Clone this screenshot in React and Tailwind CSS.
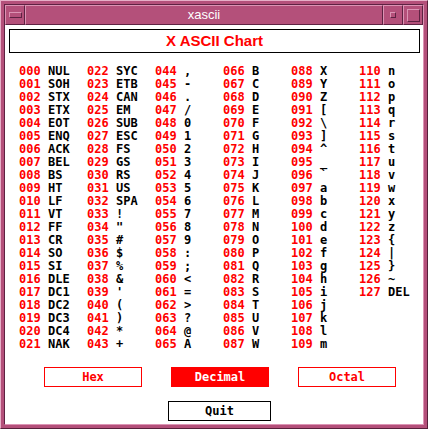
import React from 'react';

const CTRL = [
  'NUL', 'SOH', 'STX', 'ETX', 'EOT', 'ENQ', 'ACK', 'BEL', 'BS', 'HT', 'LF',
  'VT', 'FF', 'CR', 'SO', 'SI', 'DLE', 'DC1', 'DC2', 'DC3', 'DC4', 'NAK',
  'SYC', 'ETB', 'CAN', 'EM', 'SUB', 'ESC', 'FS', 'GS', 'RS', 'US', 'SPA',
];

// build the 128 entries, then cut them in columns of 22
const entries = Array.from({ length: 128 }, (_, i) => ({
  code: String(i).padStart(3, '0'),
  name: i < CTRL.length ? CTRL[i] : i === 127 ? 'DEL' : String.fromCharCode(i),
}));
const columns = [0, 1, 2, 3, 4, 5].map((c) => entries.slice(c * 22, c * 22 + 22));

const raised = 'border border-t-[#dc94b4] border-l-[#dc94b4] border-r-[#5e2242] border-b-[#5e2242]';

const TitleBar = () => (
  <div className="flex h-[20px] shrink-0">
    <div className={`${raised} w-[20px] flex items-center justify-center`}>
      <span className={`${raised} w-[13px] h-[6px]`} />
    </div>
    <div className={`${raised} flex-1 flex items-center justify-center text-white text-[13px] font-['Liberation_Sans',sans-serif]`}>
      xascii
    </div>
    <div className={`${raised} w-[20px] flex items-center justify-center`}>
      <span className={`${raised} w-[6px] h-[6px]`} />
    </div>
    <div className={`${raised} w-[20px] flex items-center justify-center`}>
      <span className={`${raised} w-[13px] h-[13px]`} />
    </div>
  </div>
);

const ModeButton = ({ label, active }) => (
  <div
    className={`w-[98px] h-[20px] flex items-center justify-center border border-[#ff0000] text-[12px] font-bold ${
      active ? 'bg-[#ff0000] text-white' : 'bg-white text-[#ff0000]'
    }`}
  >
    {label}
  </div>
);

export default function App() {
  return (
    <div className="w-[428px] h-[429px] bg-[#b4507a] p-[3px] border border-t-[#e6b0c8] border-l-[#e6b0c8] border-r-[#56203a] border-b-[#56203a]">
      <div className="h-full flex flex-col border border-t-[#5e2242] border-l-[#5e2242] border-r-[#dc94b4] border-b-[#dc94b4]">
        <TitleBar />

        <div className="flex-1 bg-white flex flex-col pt-[4px] px-[4px] font-['DejaVu_Sans_Mono',monospace]">
          <div className="h-[24px] mr-[-1px] border border-black flex items-center justify-center text-[#ff0000] text-[15px] font-bold font-['Liberation_Sans',sans-serif]">
            X ASCII Chart
          </div>

          {/* chart: six columns of 22 rows */}
          <div className="mt-[12px] pl-[10px] grid grid-cols-[repeat(6,68px)] text-[12px] font-bold leading-[13px]">
            {columns.map((col, ci) => (
              <div key={ci} className="flex flex-col">
                {col.map((e) => (
                  <div key={e.code} className="flex h-[13px] whitespace-pre">
                    <span className="w-[29px] text-[#ff0000]">{e.code}</span>
                    <span className="text-black">{e.name}</span>
                  </div>
                ))}
              </div>
            ))}
          </div>

          <div className="mt-[16px] ml-[35px] flex gap-[29px]">
            <ModeButton label="Hex" />
            <ModeButton label="Decimal" active />
            <ModeButton label="Octal" />
          </div>

          <div className="mt-[14px] ml-[159px] w-[103px] h-[20px] border border-black flex items-center justify-center text-[12px] font-bold text-black">
            Quit
          </div>
        </div>
      </div>
    </div>
  );
}
